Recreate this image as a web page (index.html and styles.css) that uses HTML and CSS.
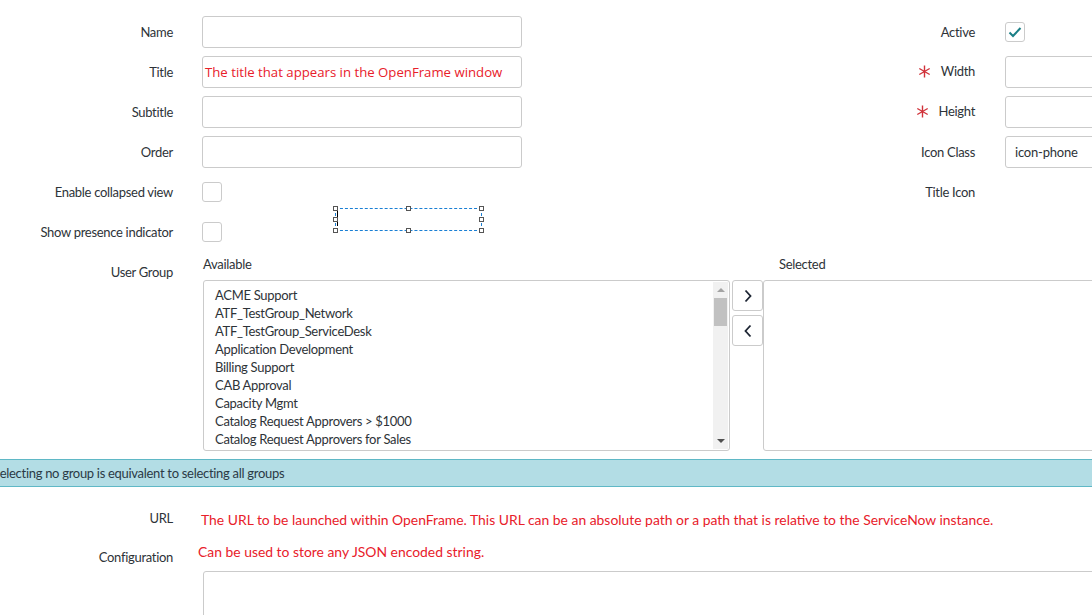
FILE: index.html
```html
<!DOCTYPE html>
<html lang="en">
<head>
	<meta charset="UTF-8">
	<title>OpenFrame Configuration</title>
	<link rel="stylesheet" href="styles.css">
</head>
<body>
	<div class="page">
		<div class="top">
			<div class="col col-left">
				<div class="row">
					<label class="lbl">Name</label>
					<div class="field"><input class="txt" type="text"></div>
				</div>
				<div class="row">
					<label class="lbl">Title</label>
					<div class="field"><div class="txt hint-in">The title that appears in the OpenFrame window</div></div>
				</div>
				<div class="row">
					<label class="lbl">Subtitle</label>
					<div class="field"><input class="txt" type="text"></div>
				</div>
				<div class="row">
					<label class="lbl">Order</label>
					<div class="field"><input class="txt" type="text"></div>
				</div>
				<div class="row">
					<label class="lbl">Enable collapsed view</label>
					<div class="field"><span class="chk"></span></div>
				</div>
				<div class="row">
					<label class="lbl">Show presence indicator</label>
					<div class="field"><span class="chk"></span></div>
				</div>
			</div>
			<div class="col col-right">
				<div class="row">
					<label class="lbl">Active</label>
					<div class="field"><span class="chk">
						<svg width="14" height="12" viewBox="0 0 14 12"><path d="M1.5 6.5 L5 10 L12.5 2" fill="none" stroke="#1b7f86" stroke-width="2"/></svg>
					</span></div>
				</div>
				<div class="row">
					<label class="lbl"><span class="req req-w"><svg width="13" height="13" viewBox="0 0 13 13"><path d="M6.5 0.5 V12.5 M1.3 3.5 L11.7 9.5 M1.3 9.5 L11.7 3.5" stroke="#d0323a" stroke-width="1.4"/></svg></span>Width</label>
					<div class="field"><input class="txt" type="text"></div>
				</div>
				<div class="row">
					<label class="lbl"><span class="req"><svg width="13" height="13" viewBox="0 0 13 13"><path d="M6.5 0.5 V12.5 M1.3 3.5 L11.7 9.5 M1.3 9.5 L11.7 3.5" stroke="#d0323a" stroke-width="1.4"/></svg></span>Height</label>
					<div class="field"><input class="txt" type="text"></div>
				</div>
				<div class="row">
					<label class="lbl">Icon Class</label>
					<div class="field"><input class="txt" type="text" value="icon-phone"></div>
				</div>
				<div class="row">
					<label class="lbl">Title Icon</label>
					<div class="field"></div>
				</div>
			</div>
		</div>

		<div class="groups">
			<label class="lbl lbl-group">User Group</label>
			<div class="bucket">
				<div class="bucket-col avail">
					<div class="bucket-head">Available</div>
					<div class="listbox">
						<ul class="items">
							<li>ACME Support</li>
							<li>ATF_TestGroup_Network</li>
							<li>ATF_TestGroup_ServiceDesk</li>
							<li>Application Development</li>
							<li>Billing Support</li>
							<li>CAB Approval</li>
							<li>Capacity Mgmt</li>
							<li>Catalog Request Approvers &gt; $1000</li>
							<li>Catalog Request Approvers for Sales</li>
						</ul>
						<div class="sbar">
							<span class="sarrow up"></span>
							<span class="sthumb"></span>
							<span class="sarrow down"></span>
						</div>
					</div>
				</div>
				<div class="bucket-btns">
					<a href="#" class="mv"><svg width="10" height="14" viewBox="0 0 10 14"><path d="M2.5 1.5 L7.5 7 L2.5 12.5" fill="none" stroke="#1d2533" stroke-width="1.8"/></svg></a>
					<a href="#" class="mv"><svg width="10" height="14" viewBox="0 0 10 14"><path d="M7.5 1.5 L2.5 7 L7.5 12.5" fill="none" stroke="#1d2533" stroke-width="1.8"/></svg></a>
				</div>
				<div class="bucket-col sel">
					<div class="bucket-head">Selected</div>
					<div class="listbox"></div>
				</div>
			</div>
		</div>

		<div class="info">Selecting no group is equivalent to selecting all groups</div>

		<div class="row row-url">
			<label class="lbl">URL</label>
			<div class="hint hint-url">The URL to be launched within OpenFrame. This URL can be an absolute path or a path that is relative to the ServiceNow instance.</div>
		</div>
		<div class="row-conf">
			<label class="lbl">Configuration</label>
			<div class="conf-field">
				<div class="hint hint-conf">Can be used to store any JSON encoded string.</div>
				<div class="area"></div>
			</div>
		</div>

		<!-- selection box left over on the canvas -->
		<div class="selbox">
			<span class="caret"></span>
			<span class="h h1"></span><span class="h h2"></span><span class="h h3"></span>
			<span class="h h4"></span><span class="h h5"></span>
			<span class="h h6"></span><span class="h h7"></span><span class="h h8"></span>
		</div>
	</div>
</body>
</html>
```

FILE: styles.css
```css
html, body{ margin: 0; padding: 0; background: #fff; overflow: hidden;}
.page{
	position: relative; width: 1092px; height: 615px; overflow: hidden;
	font-family: Lato, "Liberation Sans", sans-serif; font-size: 13px; color: #2e3338;
	letter-spacing: -0.3px;
}
.top{ display: flex; padding-top: 12px;}
.col-left{ width: 546px; flex: none;}
.col-right{ flex: none; width: 546px;}
.row{ display: flex; align-items: center; height: 40px;}
.lbl{ display: block; text-align: right; white-space: nowrap; flex: none;}
.col-left .lbl{ width: 173px; margin-right: 29px;}
.col-right .lbl{ width: 429px; margin-right: 30px;}
.field{ flex: none; display: flex; align-items: center;}
.txt{
	box-sizing: border-box; width: 320px; height: 32px; margin: 0;
	border: 1px solid #cbcbcb; border-radius: 3px; background: #fff;
	padding: 0 9px; font: inherit; color: #2e3338; outline: none; letter-spacing: -0.2px;
}
.hint-in{
	display: flex; align-items: center; padding: 0 2px; color: #e8202a;
	font-family: "Open Sans", sans-serif; font-size: 13.2px; letter-spacing: 0;
}
.chk{
	box-sizing: border-box; width: 20px; height: 20px; border: 1px solid #cbcbcb;
	border-radius: 3px; display: flex; align-items: center; justify-content: center;
}
.req{ display: inline-block; vertical-align: -2px; margin-right: 10px;}
.req-w{ margin-right: 10px;}

.groups{ display: flex; margin-top: 1px;}
.lbl-group{ width: 173px; margin-right: 30px; padding-top: 10px; line-height: 18px;}
.bucket{ display: flex;}
.bucket-head{ height: 27px; line-height: 22px;}
.sel .bucket-head{ padding-left: 16px;}
.listbox{
	box-sizing: border-box; height: 171px; border: 1px solid #cbcbcb; border-radius: 3px;
	position: relative; background: #fff;
}
.avail .listbox{ width: 527px;}
.sel .listbox{ width: 340px;}
.items{ list-style: none; margin: 0; padding: 5px 0 0 11px; line-height: 18px;}
.sbar{
	position: absolute; right: 1px; top: 1px; bottom: 1px; width: 15px; background: #f1f1f1;
}
.sthumb{ position: absolute; left: 1px; right: 1px; top: 16px; height: 28px; background: #c1c1c1;}
.sarrow{ position: absolute; left: 4px; width: 0; height: 0; border-left: 4px solid transparent; border-right: 4px solid transparent;}
.sarrow.up{ top: 6px; border-bottom: 4px solid #a3a3a3;}
.sarrow.down{ bottom: 6px; border-top: 4px solid #505050;}
.bucket-btns{ width: 31px; margin: 27px 0 0 2px; display: flex; flex-direction: column; gap: 4px;}
.mv{
	box-sizing: border-box; width: 31px; height: 31px; border: 1px solid #cbcbcb; border-radius: 3px;
	display: flex; align-items: center; justify-content: center; background: #fff;
}

.info{
	margin-top: 8px; height: 26px; line-height: 26px; background: #b3dde5;
	border-top: 1px solid #5fb8c6; border-bottom: 1px solid #5fb8c6;
	text-indent: -7px; white-space: nowrap; color: #2b3a45;
}

.row-url{ margin-top: 16px; height: 30px;}
.row-url .lbl, .row-conf .lbl{ width: 173px; margin-right: 28px;}
.hint{ color: #e8202a; font-size: 13.9px; white-space: nowrap; letter-spacing: 0;}
.hint-url{ padding-top: 3px;}
.row-conf{ display: flex; margin-top: 7px;}
.row-conf .lbl{ padding-top: 9px; margin-right: 25px;}
.conf-field{ flex: 1;}
.hint-conf{ height: 24px; line-height: 24px;}
.area{
	margin-left: 5px; margin-top: 7px; width: 1000px; height: 60px; border: 1px solid #cbcbcb; border-radius: 3px;
}

.selbox{
	position: absolute; left: 335px; top: 208px; width: 145px; height: 21px;
	border: 1px dashed #1a7fd4;
}
.caret{ position: absolute; left: 1px; top: 2px; width: 1px; height: 15px; background: #000;}
.h{
	position: absolute; width: 3px; height: 3px; border: 1px solid #555; background: #fff;
}
.h1{ left: -3px; top: -3px;}
.h2{ left: 70px; top: -3px;}
.h3{ right: -3px; top: -3px;}
.h4{ left: -3px; top: 8px;}
.h5{ right: -3px; top: 8px;}
.h6{ left: -3px; bottom: -3px;}
.h7{ left: 70px; bottom: -3px;}
.h8{ right: -3px; bottom: -3px;}
```
